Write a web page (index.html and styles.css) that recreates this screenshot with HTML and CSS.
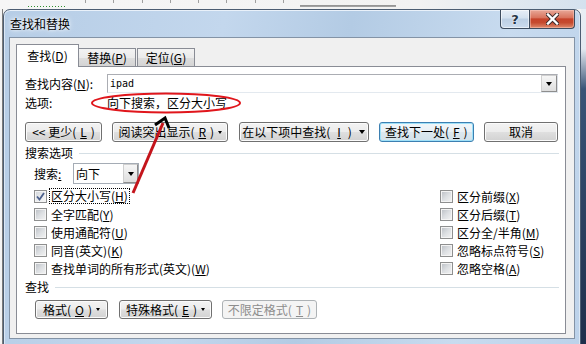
FILE: index.html
```html
<!DOCTYPE html>
<html lang="zh-CN">
<head>
  <meta charset="UTF-8" />
  <meta name="viewport" content="width=device-width, initial-scale=1" />
  <title>查找和替换</title>
  <link rel="stylesheet" href="styles.css">
</head>
<body>
  <div class="ruler"></div>
  <div class="desk">
    <div class="doc-left"></div>
    <div class="window">
      <div class="titlebar">
        <span class="title">查找和替换</span>
        <div class="caption">
          <button class="cap-help">?</button>
          <button class="cap-close">
            <svg width="13" height="12" viewBox="0 0 13 12">
              <path d="M2 1.5 L11 10.5 M11 1.5 L2 10.5" stroke="#3b2a2a" stroke-width="4.2" stroke-linecap="square"/>
              <path d="M2 1.5 L11 10.5 M11 1.5 L2 10.5" stroke="#fff" stroke-width="2.4" stroke-linecap="square"/>
            </svg>
          </button>
        </div>
      </div>
      <div class="client">
        <div class="tabs">
          <div class="tab active">查找(<u>D</u>)</div>
          <div class="tab">替换(<u>P</u>)</div>
          <div class="tab">定位(<u>G</u>)</div>
        </div>
        <div class="panel">
          <div class="field-row">
            <span class="field-label">查找内容(<u>N</u>):</span>
            <div class="combo">
              <span class="combo-text">ipad</span>
              <span class="drop"><i class="caret"></i></span>
            </div>
          </div>
          <div class="field-row opts-summary">
            <span class="field-label">选项:</span>
            <span>向下搜索，区分大小写</span>
          </div>
          <div class="btn-row">
            <button class="btn b-less">&lt;&lt; 更少(<u>L</u>)</button>
            <button class="btn b-read">阅读突出显示(<u>R</u>)<i class="caret small"></i></button>
            <button class="btn b-in">在以下项中查找(<u>I</u>)<i class="caret"></i></button>
            <button class="btn b-next default">查找下一处(<u>F</u>)</button>
            <button class="btn b-cancel">取消</button>
          </div>

          <div class="group-head"><span>搜索选项</span><i class="rule"></i></div>
          <div class="opts">
            <div class="search-dir">
              <span class="dir-label">搜索<u>:</u></span>
              <div class="select">
                <span class="select-text">向下</span>
                <span class="drop"><i class="caret"></i></span>
              </div>
            </div>
            <div class="cb-row"><i class="cb checked"><svg width="11" height="11" viewBox="0 0 11 11"><path d="M2 5.5 L4.5 8.5 L9 2" fill="none" stroke="#4a5f8c" stroke-width="1.8"/></svg></i><span class="focus">区分大小写(<u>H</u>)</span></div>
            <div class="cb-row"><i class="cb"></i><span>区分前缀(<u>X</u>)</span></div>
            <div class="cb-row"><i class="cb"></i><span>全字匹配(<u>Y</u>)</span></div>
            <div class="cb-row"><i class="cb"></i><span>区分后缀(<u>T</u>)</span></div>
            <div class="cb-row"><i class="cb"></i><span>使用通配符(<u>U</u>)</span></div>
            <div class="cb-row"><i class="cb"></i><span>区分全/半角(<u>M</u>)</span></div>
            <div class="cb-row"><i class="cb"></i><span>同音(英文)(<u>K</u>)</span></div>
            <div class="cb-row"><i class="cb"></i><span>忽略标点符号(<u>S</u>)</span></div>
            <div class="cb-row"><i class="cb"></i><span>查找单词的所有形式(英文)(<u>W</u>)</span></div>
            <div class="cb-row"><i class="cb"></i><span>忽略空格(<u>A</u>)</span></div>
          </div>

          <div class="group-head find-head"><span>查找</span><i class="rule"></i></div>
          <div class="fmt-row">
            <button class="btn f-fmt">格式(<u>O</u>)<i class="caret small"></i></button>
            <button class="btn f-special">特殊格式(<u>E</u>)<i class="caret small"></i></button>
            <button class="btn f-none" disabled>不限定格式(<u>T</u>)</button>
          </div>
        </div>
      </div>
    </div>
    <div class="doc-right"></div>
  </div>

  <svg class="annot" width="586" height="344" viewBox="0 0 586 344">
    <ellipse cx="166" cy="103" rx="74" ry="9.5" fill="none" stroke="#e0161c" stroke-width="2"/>
    <line x1="133" y1="193" x2="163" y2="123" stroke="#c4141b" stroke-width="3"/>
    <polyline points="155,125 165,118 169,128" fill="none" stroke="#000" stroke-width="3"/>
  </svg>
</body>
</html>
```

FILE: styles.css
```css
/* Reset */
* {
  margin: 0; padding: 0; box-sizing: border-box;
}
html, body {
  width: 586px;
  height: 344px;
  overflow: hidden;
}
body {
  position: relative;
  font-family: "Noto Sans CJK SC", "Noto Sans", sans-serif;
  font-size: 12px;
  color: #000;
  background: #f3f3f3;
}
u { text-decoration: underline; text-underline-offset: 1px; }

/* 背后的文档：标尺 */
.ruler {
  height: 9px;
  background:
    repeating-linear-gradient(90deg, #2f8f2f 0 1px, transparent 1px 3px) 28px 6px / 38px 1px no-repeat,
    linear-gradient(#8f8f8f, #a8a8a8) 300px 5px / 96px 2px no-repeat,
    repeating-linear-gradient(90deg, #a0a0a0 0 1px, transparent 1px 28.3px) 85px 0 / 220px 3px no-repeat,
    linear-gradient(90deg, #f6f6f6 0, #f2f2f2 420px, #d4e1ee 586px);
}
.desk {
  display: flex;
  height: 335px;
}
.doc-left {
  width: 3px;
  background: linear-gradient(90deg, #f4f4f4 0 2px, #7b7b7b 2px);
}
.doc-right {
  width: 5px;
  background: linear-gradient(180deg, #e9eef4 0, #e3e9f0 40px, #3a5477 80px, #1e2f4b 100%);
}

/* 对话框窗口 */
.window {
  width: 578px;
  height: 340px;
  flex: none;
  border: 1px solid #4c5d72;
  border-radius: 7px 7px 0 0;
  padding: 0 5px;
  display: flex;
  flex-direction: column;
  background: linear-gradient(100deg, #b6cde6 0%, #c3d7ed 35%, #b3cbe4 55%, #c8dbef 80%, #bcd2ea 100%);
  box-shadow: inset 0 1px 0 #e9f1fa, inset 1px 0 0 #dbe7f4, inset -1px 0 0 #dbe7f4;
}
.titlebar {
  height: 27px;
  display: flex;
  justify-content: space-between;
  align-items: flex-start;
}
.title {
  margin: 7px 0 0 1px;
  line-height: 14px;
  font-size: 12px;
  text-shadow: 0 0 6px #fff, 0 0 3px #fff;
}
.caption {
  display: flex;
}
.caption button {
  height: 19px;
  border: 1px solid #3d4c5e;
  border-top: none;
  display: flex;
  align-items: center;
  justify-content: center;
}
.cap-help {
  width: 29px;
  border-radius: 0 0 0 4px;
  border-right: none !important;
  background: linear-gradient(#e6eef7 0%, #d3e1ef 45%, #bccfe4 50%, #cbdcee 100%);
  box-shadow: inset 0 0 0 1px rgba(255,255,255,.55);
  font-family: "DejaVu Sans", sans-serif;
  font-weight: bold;
  font-size: 13px;
  color: #263445;
  text-shadow: 0 0 2px #fff, 0 0 1px #fff;
}
.cap-close {
  width: 46px;
  border-radius: 0 0 4px 0;
  background: linear-gradient(#e8a898 0%, #d9755f 42%, #c6432a 50%, #c54a2f 70%, #de8a6c 100%);
  box-shadow: inset 0 0 0 1px rgba(255,210,200,.45);
}

.client {
  height: 302px;
  border: 1px solid #8393a6;
  background: #f0f0f0;
  padding: 6px 8px 4px 6px;
  display: flex;
  flex-direction: column;
}

/* 选项卡 */
.tabs {
  height: 22px;
  display: flex;
  align-items: flex-end;
}
.tab {
  height: 18px;
  width: 58px;
  border: 1px solid #898c95;
  border-bottom: none;
  background: linear-gradient(#f3f3f3 0%, #ebebeb 50%, #dedede 51%, #d4d4d4 100%);
  display: flex;
  align-items: center;
  justify-content: center;
  line-height: 14px;
}
.tab + .tab { margin-left: -1px; }
.tab.active {
  position: relative;
  z-index: 1;
  width: 63px;
  height: 23px;
  margin-bottom: -1px;
  background: #fff;
  padding-bottom: 1px;
}
.tab.active + .tab { margin-left: -1px; }
.tab:last-child { margin-left: 1px; }

.panel {
  flex: 1;
  background: #fff;
  border: 1px solid #898c95;
  padding: 7px 7px 0 8px;
  display: flex;
  flex-direction: column;
}

.field-row {
  display: flex;
  align-items: center;
  height: 19px;
}
.field-label {
  width: 82px;
  flex: none;
}
.opts-summary { height: 18px; }

.combo {
  flex: 1;
  height: 19px;
  border: 1px solid #abadb3;
  border-right-color: #dbdfe6;
  border-bottom-color: #e3e9ef;
  display: flex;
  align-items: center;
  justify-content: space-between;
  padding: 0 0 0 2px;
}
.combo-text {
  font-family: "DejaVu Sans Mono", "Liberation Mono", monospace;
  font-size: 10px;
}
.drop {
  width: 16px;
  height: 17px;
  border: 1px solid #8d8d8d;
  border-top-color: #cfcfcf;
  border-left-color: #cfcfcf;
  background: linear-gradient(#f6f6f6, #dedede);
  display: flex;
  align-items: center;
  justify-content: center;
}
.caret {
  display: inline-block;
  border-left: 3.5px solid transparent;
  border-right: 3.5px solid transparent;
  border-top: 4px solid #000;
}
.caret.small {
  border-left-width: 2.5px;
  border-right-width: 2.5px;
  border-top-width: 3px;
}

/* 按钮 */
.btn-row {
  margin-top: 11px;
  display: flex;
  justify-content: space-between;
}
.btn {
  height: 20px;
  border: 1px solid #707070;
  border-radius: 3px;
  background: linear-gradient(#f3f3f3 0%, #ececec 48%, #dfdfdf 52%, #d2d2d2 100%);
  box-shadow: inset 0 0 0 1px #fbfbfb;
  font: inherit;
  color: #000;
  display: flex;
  align-items: center;
  justify-content: center;
  gap: 4px;
  line-height: 14px;
}
.b-less { width: 77px; }
.b-read { width: 116px; }
.b-in { width: 130px; gap: 7px; }
.b-next { width: 95px; }
.b-cancel { width: 74px; }
.btn.default {
  border-color: #3c7fb1;
  box-shadow: inset 0 0 0 1px #9ee0f8;
  background: linear-gradient(#f1f6f9 0%, #e9f1f6 48%, #dce8ef 52%, #d3e2ea 100%);
}

/* 分组标题 */
.group-head {
  margin-top: 4px;
  height: 14px;
  display: flex;
  align-items: center;
  line-height: 14px;
}
.rule {
  flex: 1;
  margin-left: 6px;
  margin-right: -1px;
  border-top: 1px solid #d5dfe5;
}
.find-head { margin-top: 3px; }

/* 搜索选项 */
.opts {
  margin-top: 3px;
  padding-left: 9px;
  display: grid;
  grid-template-columns: 406px 1fr;
  grid-template-rows: 24px repeat(5, 18px);
}
.search-dir {
  grid-column: 1 / -1;
  display: flex;
  align-items: flex-start;
  height: 21px;
}
.dir-label {
  width: 39px;
  line-height: 21px;
}
.select {
  width: 66px;
  height: 21px;
  border: 1px solid #a5acb5;
  display: flex;
  align-items: center;
  justify-content: space-between;
  padding-left: 2px;
}
.select .drop {
  width: 15px;
  height: 19px;
}
.cb-row {
  display: flex;
  align-items: center;
  height: 18px;
  white-space: nowrap;
}
.cb {
  width: 13px;
  height: 13px;
  flex: none;
  margin-right: 4px;
  border: 1px solid #8e8f8f;
  background: linear-gradient(135deg, #b9bdc3 0%, #dcdfe2 50%, #f4f4f4 100%);
  box-shadow: inset 0 0 0 1px #f4f4f4;
  display: flex;
  align-items: center;
  justify-content: center;
}
.cb.checked {
  margin-right: 2px;
  background: linear-gradient(135deg, #cfd3d8 0%, #e8eaec 50%, #f7f7f7 100%);
}
.focus {
  border: 1px dotted #000;
  padding: 0 1px;
  line-height: 14px;
}

/* 格式按钮 */
.fmt-row {
  margin-top: 6px;
  padding-left: 10px;
  display: flex;
  gap: 11px;
}
.fmt-row .btn { height: 19px; }
.f-fmt { width: 73px; }
.f-special { width: 93px; }
.f-none {
  width: 95px;
  margin-left: -1px;
  color: #8d8d8d;
  border-color: #adb2b5;
  background: #f4f4f4;
  box-shadow: none;
}

/* 标注 */
.annot {
  position: absolute;
  left: 0;
  top: 0;
  pointer-events: none;
}
```
